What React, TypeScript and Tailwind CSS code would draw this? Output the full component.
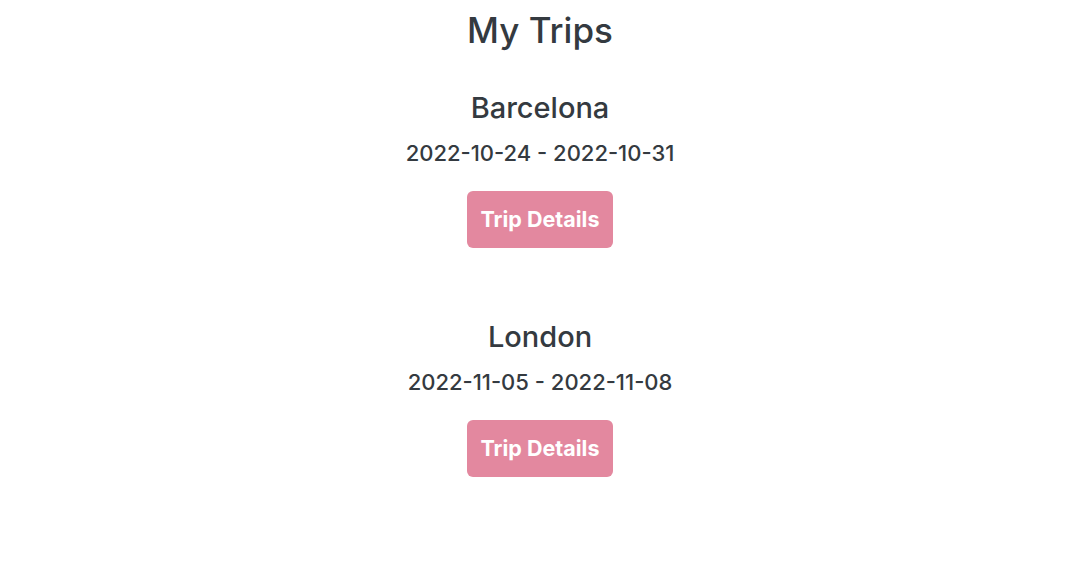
const trips = [
    { city: "Barcelona", start: "2022-10-24", end: "2022-10-31" },
    { city: "London", start: "2022-11-05", end: "2022-11-08" },
];

const TripCard = ({ city, start, end }: { city: string; start: string; end: string }) => {
    return (
        <div className="flex flex-col items-center mb-[72px]">
            <h2 className="text-[29px] leading-[34px] font-medium text-[#343a40]">{city}</h2>
            <p className="mt-[14px] text-[22px] leading-[28px] font-medium text-[#343a40]">
                {start} - {end}
            </p>
            <button className="mt-[24px] w-[146px] h-[57px] rounded-[6px] bg-[#e3889f] text-white font-bold text-[21.5px]">
                Trip Details
            </button>
        </div>
    );
};

export default function App() {
    return (
        <div
            className="w-[1080px] h-[566px] bg-white flex flex-col items-center pt-[8px]"
            style={{ fontFamily: 'Inter, "Liberation Sans", Arial, sans-serif' }}
        >
            <h1 className="text-[35px] leading-[44px] font-medium text-[#343a40] mb-[39px]">My Trips</h1>
            {trips.map((trip) => (
                <TripCard key={trip.city} {...trip} />
            ))}
        </div>
    );
}
